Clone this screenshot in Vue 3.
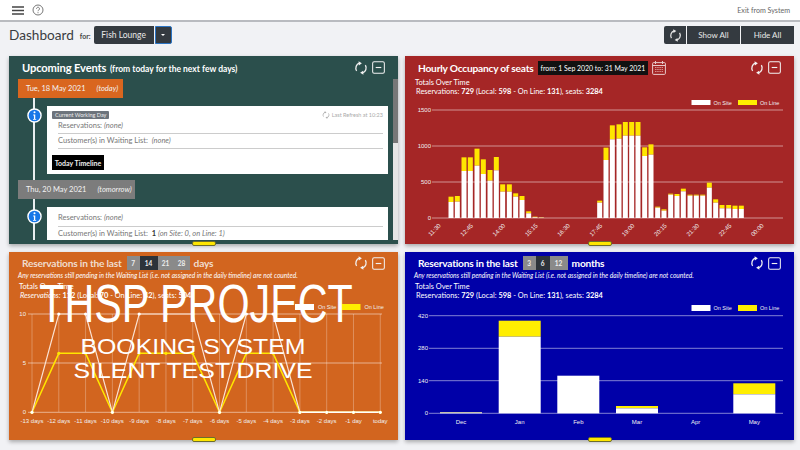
<template>
  <div class="page">
    <svg class="defs" width="0" height="0">
      <symbol id="refresh" viewBox="0 0 16 16">
        <path d="M3 11.2A6 6 0 0 1 6.2 2.4M13 4.8A6 6 0 0 1 9.8 13.6" fill="none" stroke="currentColor" stroke-width="1.5" />
        <path d="M5.2 .4 9 2.6 5.6 5ZM10.8 15.6 7 13.4 10.4 11Z" fill="currentColor" />
      </symbol>
      <symbol id="minus" viewBox="0 0 14 14">
        <rect x=".7" y=".7" width="12.6" height="12.6" rx="1.6" fill="none" stroke="currentColor" stroke-width="1.1" />
        <path d="M4 7h6" stroke="currentColor" stroke-width="1.2" />
      </symbol>
      <symbol id="info" viewBox="0 0 16 16">
        <circle cx="8" cy="8" r="7" fill="#1877e8" stroke="#fff" stroke-width="1.5" />
        <circle cx="8" cy="4.6" r="1.1" fill="#fff" />
        <path d="M6.6 7h2.2v4.6h1v.9H6.400v-.9h1V7.900h-.8Z" fill="#fff" />
      </symbol>
    </svg>

    <header class="topbar">
      <div class="top-left">
        <svg class="menu" width="12" height="9" viewBox="0 0 12 9">
          <path d="M0 1h12M0 4.500h12M0 8h12" stroke="#444" stroke-width="1.4" />
        </svg>
        <svg class="help" width="12" height="12" viewBox="0 0 12 12">
          <circle cx="6" cy="6" r="5" fill="none" stroke="#777" stroke-width="1" />
          <path d="M4.500 4.700a1.500 1.500 0 1 1 2.300 1.300c-.6.400-.8.600-.8 1.200M6 8.200v1" fill="none" stroke="#777" stroke-width="1" />
        </svg>
      </div>
      <span class="exit">Exit from System</span>
    </header>

    <div class="toolbar">
      <h1 class="page-title">Dashboard</h1>
      <span class="for">for:</span>
      <button class="dark select">Fish Lounge</button>
      <button class="dark caret"><i></i></button>
      <div class="actions">
        <button class="dark act-icon"><svg width="13" height="13"><use href="#refresh" /></svg></button>
        <button class="dark act">Show All</button>
        <button class="dark act">Hide All</button>
      </div>
    </div>

    <main class="grid">
      <section class="card green">
        <div class="card-head">
          <h2 class="big">Upcoming Events <small>(from today for the next few days)</small></h2>
          <div class="tools">
            <svg width="14" height="14"><use href="#refresh" /></svg>
            <svg width="13" height="13"><use href="#minus" /></svg>
          </div>
        </div>
        <div class="events">
          <div class="event-list">
            <div class="chip orange-chip"><span>Tue, 18 May 2021</span><em>(today)</em></div>
            <div class="event-row first">
              <svg class="info" width="15" height="15"><use href="#info" /></svg>
              <div class="event-box">
                <div class="box-top">
                  <span class="badge">Current Working Day</span>
                  <span class="refresh-note">
                    <svg width="8" height="8"><use href="#refresh" /></svg>
                    Last Refresh at 10:23
                  </span>
                </div>
                <div class="line">Reservations: <em>(none)</em></div>
                <div class="line">Customer(s) in Waiting List: &nbsp;<em>(none)</em></div>
                <button class="timeline-btn">Today Timeline</button>
              </div>
            </div>
            <div class="chip grey-chip"><span>Thu, 20 May 2021</span><em>(tomorrow)</em></div>
            <div class="event-row second">
              <svg class="info" width="15" height="15"><use href="#info" /></svg>
              <div class="event-box">
                <div class="line">Reservations: <em>(none)</em></div>
                <div class="line">Customer(s) in Waiting List: &nbsp;<b>1</b> <em>(on Site: 0, on Line: 1)</em></div>
              </div>
            </div>
          </div>
          <div class="scrollbar"><div class="thumb"></div></div>
        </div>
        <span class="tab"></span>
      </section>

      <section class="card red">
        <div class="card-head">
          <h2>Hourly Occupancy of seats</h2>
          <span class="range">from: 1 Sep 2020 to: 31 May 2021</span>
          <svg class="calendar" width="14" height="14" viewBox="0 0 14 14">
            <rect x=".6" y="1.600" width="12.800" height="11.800" rx="1" fill="none" stroke="#e8c9c9" stroke-width="1" />
            <path d="M.6 4.500h12.800M3.500 0v3M10.500 0v3" stroke="#e8c9c9" stroke-width="1" />
            <path d="M3 6.500h8M3 8.500h8M3 10.500h8" stroke="#d98f8f" stroke-width="1" stroke-dasharray="1.500 .7" />
          </svg>
          <div class="tools">
            <svg width="14" height="14"><use href="#refresh" /></svg>
            <svg width="13" height="13"><use href="#minus" /></svg>
          </div>
        </div>
        <div class="totals">
          <div>Totals Over Time</div>
          <div class="tot-line">Reservations: <b>729</b> (Local: <b>598</b> - On Line: <b>131</b>), seats: <b>3284</b></div>
        </div>
        <svg class="chart" width="389" height="144" viewBox="405 100 389 144">
          <g v-for="k in legendX" :key="k.label">
            <rect :x="k.x + 691.500" y="100" width="19" height="5" :fill="k.fill" />
            <text :x="k.x + 713.500" y="105" class="legend">{{ k.label }}</text>
          </g>
          <g v-for="t in hourlyTicks" :key="t.label">
            <line x1="432" x2="783" :y1="t.y" :y2="t.y" class="gridline" />
            <text x="431" :y="t.y + 2" class="tick" text-anchor="end">{{ t.label }}</text>
          </g>
          <g v-for="b in hourlyBars" :key="b.x">
            <rect :x="b.x - 2.500" :y="b.top" width="5" :height="b.mid - b.top" fill="#ffe600" />
            <rect :x="b.x - 2.500" :y="b.mid" width="5" :height="218 - b.mid" fill="#fff" />
          </g>
          <text v-for="l in hourlyLabels" :key="l.t" class="tick" text-anchor="end"
            :transform="`translate(${l.x} 224) rotate(-45)`" y="3">{{ l.t }}</text>
        </svg>
        <span class="tab"></span>
      </section>

      <section class="card orange">
        <div class="card-head low">
          <h2 class="faint">Reservations in the last</h2>
          <div class="pills">
            <span>7</span><span class="on">14</span><span>21</span><span>28</span>
          </div>
          <h2 class="faint">days</h2>
          <div class="tools">
            <svg width="14" height="14"><use href="#refresh" /></svg>
            <svg width="13" height="13"><use href="#minus" /></svg>
          </div>
        </div>
        <p class="note">Any reservations still pending in the Waiting List (i.e. not assigned in the daily timeline) are not counted.</p>
        <div class="totals compact">
          <div>Totals Over Time</div>
          <div class="tot-line"><em>Reservations:</em> <b>112</b> (Local: <b>70</b> - On Line: <b>42</b>), seats: <b>504</b></div>
        </div>
        <svg class="chart" width="389" height="140" viewBox="9 300 389 140">
          <g v-for="k in legendX" :key="k.label">
            <rect :x="k.x + 295" y="304" width="19" height="6" :fill="k.fill" />
            <text :x="k.x + 318" y="309" class="legend">{{ k.label }}</text>
          </g>
          <line v-for="p in linePoints" :key="p.x" :x1="p.x" :x2="p.x" y1="314" y2="412" class="gridline thin" />
          <g v-for="t in lineTicks" :key="t.label">
            <line x1="28" x2="382" :y1="t.y" :y2="t.y" class="gridline" />
            <text x="26" :y="t.y + 2" class="tick" text-anchor="end">{{ t.label }}</text>
          </g>
          <polyline :points="linePath('y')" fill="none" stroke="#ffe600" stroke-width="1.500" />
          <polyline :points="linePath('w')" fill="none" stroke="#fbe3d4" stroke-width="1.200" />
          <line x1="300" x2="380" y1="412.300" y2="412.300" stroke="#fff" stroke-width="1.500" />
          <circle v-for="p in linePoints" :key="'y' + p.x" :cx="p.x" :cy="p.y" r="1.600" fill="#ffe600" />
          <circle v-for="p in linePoints" :key="'w' + p.x" :cx="p.x" :cy="p.w" r="1.600" fill="#fff" />
          <text v-for="p in linePoints" :key="'t' + p.x" :x="p.x" y="423" class="tick" text-anchor="middle">{{ p.label }}</text>
        </svg>
        <span class="tab"></span>
      </section>

      <section class="card blue">
        <div class="card-head low">
          <h2>Reservations in the last</h2>
          <div class="pills narrow">
            <span>3</span><span class="on">6</span><span>12</span>
          </div>
          <h2>months</h2>
          <div class="tools">
            <svg width="14" height="14"><use href="#refresh" /></svg>
            <svg width="13" height="13"><use href="#minus" /></svg>
          </div>
        </div>
        <p class="note">Any reservations still pending in the Waiting List (i.e. not assigned in the daily timeline) are not counted.</p>
        <div class="totals compact">
          <div>Totals Over Time</div>
          <div class="tot-line">Reservations: <b>729</b> (Local: <b>598</b> - On Line: <b>131</b>), seats: <b>3284</b></div>
        </div>
        <svg class="chart" width="389" height="140" viewBox="405 300 389 140">
          <g v-for="k in legendX" :key="k.label">
            <rect :x="k.x + 691.500" y="305" width="19" height="6" :fill="k.fill" />
            <text :x="k.x + 713.500" y="310" class="legend">{{ k.label }}</text>
          </g>
          <g v-for="t in monthTicks" :key="t.label">
            <line x1="429" x2="783" :y1="t.y" :y2="t.y" class="gridline" />
            <text x="428" :y="t.y + 2" class="tick" text-anchor="end">{{ t.label }}</text>
          </g>
          <g v-for="m in monthBars" :key="m.label">
            <rect :x="m.x" :y="m.top" width="42" :height="m.mid - m.top" fill="#ffee00" />
            <rect :x="m.x" :y="m.mid" width="42" :height="413.300 - m.mid" fill="#fff" />
            <text :x="m.x + 21" y="424" class="tick" text-anchor="middle">{{ m.label }}</text>
          </g>
        </svg>
        <span class="tab"></span>
      </section>
    </main>

    <div class="watermark">
      <div class="wm-big">THSP PROJECT</div>
      <div class="wm-small">BOOKING SYSTEM</div>
      <div class="wm-small">SILENT TEST DRIVE</div>
    </div>
  </div>
</template>

<script setup>
const legendX = [
  { label: 'On Site', x: 0, fill: '#fff' },
  { label: 'On Line', x: 46.500, fill: '#ffee00' }
]

const hourlyTicks = [
  { label: '1500', y: 110 },
  { label: '1000', y: 146 },
  { label: '500', y: 182 },
  { label: '0', y: 218 }
]

// tops measured off the chart: [centre, yellow top, white top], in 3x crop pixels
const rawBars = [
  [153, 590, 606], [172, 588, 605], [192, 472, 513], [211, 472, 513], [231, 446, 497],
  [250, 478, 522], [270, 510, 542], [289, 471, 511], [308, 553, 575], [328, 553, 575],
  [347, 580, 590], [366, 588, 600], [386, 634, 640], [405, 650, 652], [424, 652, 653],
  [599, 602, 608], [618, 443, 480], [637, 376, 418], [657, 373, 416], [676, 366, 407],
  [695, 366, 407], [714, 366, 407], [734, 442, 468], [753, 433, 464], [773, 620, 623],
  [792, 628, 632], [812, 581, 584], [831, 582, 588], [850, 566, 574], [870, 584, 587],
  [889, 584, 587], [908, 584, 587], [928, 548, 563], [947, 598, 608], [966, 615, 625],
  [986, 615, 625], [1005, 617, 627], [1024, 617, 627]
]
const hourlyBars = rawBars.map(([x, t, m]) => ({ x: 400 + x / 3, top: t / 3, mid: m / 3 }))

const hourlyLabels = ['11:30', '12:45', '14:00', '15:15', '16:30', '17:45', '19:00', '20:15', '21:30', '22:45', '00:00']
  .map((t, i) => ({ t, x: 439 + i * 32.300 }))

const lineTicks = [
  { label: '10', y: 314 },
  { label: '5', y: 363 },
  { label: '0', y: 412.300 }
]
const lineLabels = ['-13 days', '-12 days', '-11 days', '-10 days', '-9 days', '-8 days', '-7 days', '-6 days', '-5 days', '-4 days', '-3 days', '-2 days', '-1 day', 'today']
const whiteVals = [0, 10, 10, 0, 10, 10, 10, 0, 10, 10, 0, 0, 0, 0]
const yellowVals = [0, 6, 6, 0, 6, 6, 6, 0, 6, 6, 0, 0, 0, 0]
const linePoints = lineLabels.map((label, i) => ({
  label,
  x: 32 + i * 26.790,
  w: 412.300 - whiteVals[i] * 9.830,
  y: 412.300 - yellowVals[i] * 9.830
}))
function linePath(key) {
  return linePoints.map((p) => `${p.x},${p[key]}`).join(' ')
}

const monthTicks = [
  { label: '420', y: 315.700 },
  { label: '280', y: 348.300 },
  { label: '140', y: 380.700 },
  { label: '0', y: 413.300 }
]
const monthBars = [
  { label: 'Dec', x: 440, top: 412, mid: 412.500 },
  { label: 'Jan', x: 498.700, top: 320.700, mid: 336.700 },
  { label: 'Feb', x: 557.300, top: 375.700, mid: 375.700 },
  { label: 'Mar', x: 616, top: 406, mid: 408.300 },
  { label: 'Apr', x: 674.700, top: 413.300, mid: 413.300 },
  { label: 'May', x: 733.300, top: 383.300, mid: 394.300 }
]
</script>

<style>
html, body { margin: 0; background: #f1f2f5; }
</style>

<style scoped>
.page {
  position: relative;
  width: 800px;
  height: 450px;
  overflow: hidden;
  background: #f1f2f5;
  font-family: Lato, sans-serif;
  color: #333;
}
.defs { position: absolute; }
.topbar {
  height: 20px;
  display: flex;
  align-items: center;
  justify-content: space-between;
  padding: 0 10px 0 12px;
  background: #fff;
  border-bottom: 2px solid #b9bbc0;
}
.top-left { display: flex; align-items: center; gap: 8px; }
.exit { font-size: 7.100px; color: #666; }
.toolbar {
  height: 34px;
  display: flex;
  align-items: center;
  padding: 0 6px 8px 9px;
  box-sizing: border-box;
}
.page-title { margin: 0; font-size: 13.600px; font-weight: 400; color: #3a3d42; }
.for { margin: 2px 3px 0 6px; font-size: 7px; font-weight: 700; color: #444; }
button { font-family: inherit; border: 0; padding: 0; }
.dark { background: #343a40; color: #e8e8e8; font-size: 8.500px; height: 18px; }
.select { width: 60px; border-radius: 2px 0 0 2px; }
.caret { width: 17px; margin-left: 1px; border: 1px solid #2b74c4; border-radius: 0 2px 2px 0; display: flex; align-items: center; justify-content: center; }
.caret i { border: 2px solid transparent; border-top: 2.500px solid #fff; margin-top: 2px; }
.actions { margin-left: auto; display: flex; gap: 1px; }
.act-icon { width: 22px; display: flex; align-items: center; justify-content: center; border-radius: 2px 0 0 2px; }
.act { width: 53px; font-size: 8px; }
.grid {
  display: grid;
  grid-template-columns: 389px 389px;
  grid-auto-rows: 188px;
  gap: 8px 7px;
  padding-left: 9px;
}
.card {
  position: relative;
  color: #fff;
  box-shadow: 0 2px 4px rgba(0, 0, 0, .3);
}
.green { background: #2b4f4c; }
.red { background: #a52626; }
.orange { background: #d2651f; }
.blue { background: #0000a8; }
.card-head {
  height: 23px;
  display: flex;
  align-items: center;
  gap: 4px;
  padding: 0 13px;
  box-sizing: border-box;
}
.card-head.low { height: 19px; padding-top: 3px; }
h2 { margin: 0; font-size: 10.200px; font-weight: 700; letter-spacing: -.22px; white-space: nowrap; }
h2.big { font-size: 11.200px; letter-spacing: -.15px; }
h2 small { font-size: 8.500px; font-weight: 700; letter-spacing: 0; margin-left: 1px; }
.faint { color: #f0dccd; }
.tools { margin-left: auto; display: flex; align-items: center; gap: 4px; color: #f2f2f2; }
.range { background: #111; font-size: 6.900px; padding: 3px; line-height: 8px; white-space: nowrap; }
.events { display: flex; height: 161px; }
.event-list { flex: 1; overflow: hidden; padding-left: 9px; }
.scrollbar { width: 5px; background: #e6e6e6; height: 161px; }
.thumb { height: 64px; background: #777; }
.chip {
  height: 19px;
  display: flex;
  align-items: center;
  gap: 11px;
  padding: 0 8px;
  box-sizing: border-box;
  font-size: 7.500px;
  color: #f3f3f3;
  white-space: nowrap;
}
.orange-chip { width: 105px; background: #d9661f; }
.grey-chip { width: 117px; background: #7c7c7c; }
.event-row {
  position: relative;
  padding-left: 29px;
  padding-right: 5px;
}
.event-row::before {
  content: "";
  position: absolute;
  left: 15px;
  top: 0;
  bottom: 0;
  width: 2px;
  background: #e9eef0;
}
.event-row.first { padding-top: 8px; padding-bottom: 6px; }
.event-row.second { padding-top: 8px; }
.info { position: absolute; left: 8.500px; top: 10px; }
.event-box { background: #fff; color: #777; font-size: 7.500px; padding: 5px; height: 58px; }
.second .event-box { padding-top: 4px; height: 60px; }
.box-top { display: flex; justify-content: space-between; align-items: center; height: 8px; }
.badge { background: #6d747c; color: #eee; font-size: 5.500px; padding: 1px 3px; border-radius: 1px; }
.refresh-note { font-size: 5.500px; color: #aaa; display: flex; align-items: center; gap: 2px; }
.line { margin-left: 6px; height: 14px; line-height: 14px; border-bottom: 1px solid #ccc; white-space: nowrap; }
.second .line { height: 14.500px; line-height: 14.500px; }
.line b { color: #333; }
.timeline-btn { display: block; margin-top: 6px; background: #000; color: #eee; font-size: 7px; height: 15px; width: 52px; font-weight: 700; }
.totals { font-size: 7.400px; padding-left: 10px; line-height: 8.500px; height: 21px; box-sizing: border-box; }
.tot-line { padding-left: 1px; white-space: nowrap; }
.compact { height: 20px; padding-top: 3px; }
.note { margin: 0; padding: 0 0 0 9px; height: 9px; font-size: 6.600px; line-height: 8px; font-style: italic; white-space: nowrap; }
.chart { display: block; }
.pills { display: flex; height: 14px; align-items: stretch; margin-left: 1px; }
.pills span { width: 16px; background: #8a8a8a; color: #eee; font-size: 6.500px; font-weight: 700; display: flex; align-items: center; justify-content: center; }
.pills span:first-child { width: 13px; }
.pills .on { background: #2d333a; width: 18px; }
.narrow span, .narrow .on { width: 14px; }
.narrow span:last-child { width: 18px; }
.gridline { stroke: rgba(255, 255, 255, .5); stroke-width: 1; }
.thin { stroke: rgba(255, 255, 255, .28); }
.tick { font-size: 6px; fill: #f0f0f0; font-family: "Liberation Sans", sans-serif; }
.legend { font-size: 5.500px; fill: #f0f0f0; font-family: "Liberation Sans", sans-serif; }
.tab {
  position: absolute;
  left: 183px;
  bottom: -2px;
  width: 22px;
  height: 3px;
  background: #ffe600;
  border: 1px solid #6d6d2c;
  border-radius: 2px;
}
.watermark {
  position: absolute;
  left: 40px;
  top: 273px;
  width: 312px;
  color: #fff;
  font-family: "Liberation Sans", sans-serif;
  pointer-events: none;
  white-space: nowrap;
}
.wm-big {
  font-size: 54px;
  line-height: 60px;
  margin-bottom: 2px;
  transform: scaleX(.765);
  display: flex;
  justify-content: center;
}
.wm-small {
  font-size: 22px;
  line-height: 23.500px;
  transform: translateX(-3px) scaleX(1.130);
  display: flex;
  justify-content: center;
}
</style>
